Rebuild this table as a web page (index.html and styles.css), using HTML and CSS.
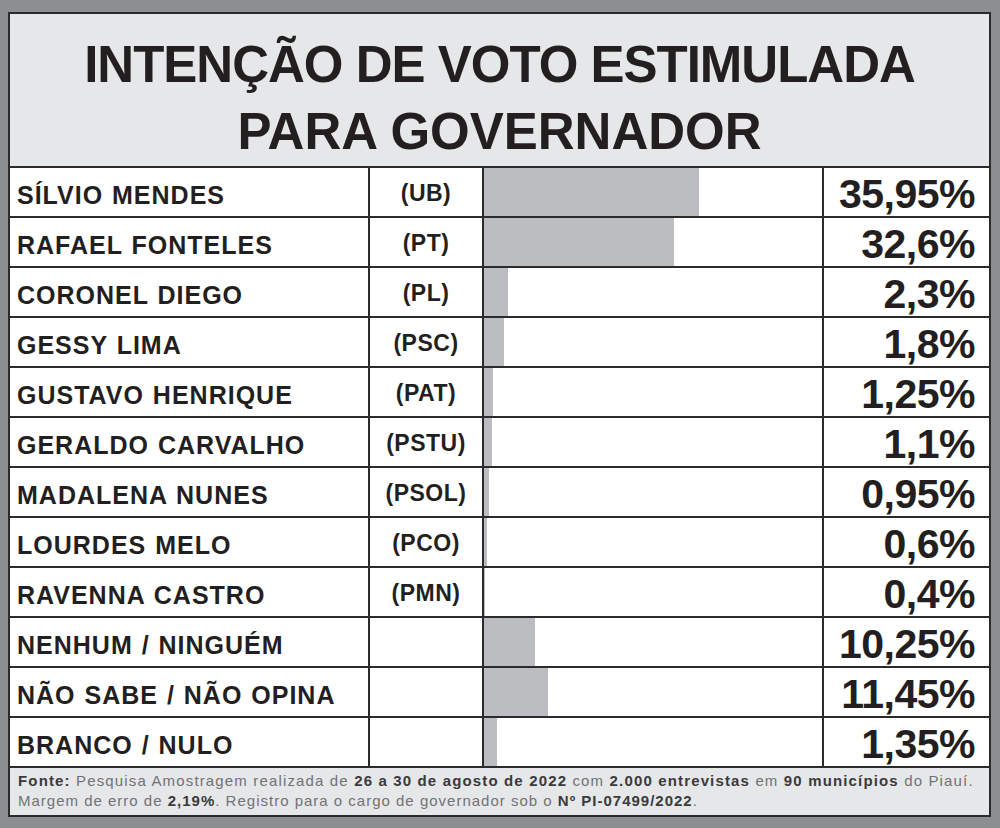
FILE: index.html
```html
<!DOCTYPE html>
<html lang="pt-BR">
<head>
<meta charset="utf-8">
<title>Intenção de voto estimulada para governador</title>
<link rel="stylesheet" href="styles.css">
</head>
<body>
<div class="panel">
  <div class="title">
    <div class="title-line">INTENÇÃO DE VOTO ESTIMULADA</div>
    <div class="title-line second">PARA GOVERNADOR</div>
  </div>
  <div class="grid">
    <div class="cell name">SÍLVIO MENDES</div><div class="cell party">(UB)</div><div class="cell bar"><span class="fill" style="width:215px"></span></div><div class="cell pct">35,95%</div>
    <div class="cell name">RAFAEL FONTELES</div><div class="cell party">(PT)</div><div class="cell bar"><span class="fill" style="width:190px"></span></div><div class="cell pct">32,6%</div>
    <div class="cell name">CORONEL DIEGO</div><div class="cell party">(PL)</div><div class="cell bar"><span class="fill" style="width:24px"></span></div><div class="cell pct">2,3%</div>
    <div class="cell name">GESSY LIMA</div><div class="cell party">(PSC)</div><div class="cell bar"><span class="fill" style="width:20px"></span></div><div class="cell pct">1,8%</div>
    <div class="cell name">GUSTAVO HENRIQUE</div><div class="cell party">(PAT)</div><div class="cell bar"><span class="fill" style="width:9px"></span></div><div class="cell pct">1,25%</div>
    <div class="cell name">GERALDO CARVALHO</div><div class="cell party">(PSTU)</div><div class="cell bar"><span class="fill" style="width:8px"></span></div><div class="cell pct">1,1%</div>
    <div class="cell name">MADALENA NUNES</div><div class="cell party">(PSOL)</div><div class="cell bar"><span class="fill" style="width:5px"></span></div><div class="cell pct">0,95%</div>
    <div class="cell name">LOURDES MELO</div><div class="cell party">(PCO)</div><div class="cell bar"><span class="fill" style="width:3px"></span></div><div class="cell pct">0,6%</div>
    <div class="cell name">RAVENNA CASTRO</div><div class="cell party">(PMN)</div><div class="cell bar"><span class="fill" style="width:1px"></span></div><div class="cell pct">0,4%</div>
    <div class="cell name">NENHUM / NINGUÉM</div><div class="cell party"></div><div class="cell bar"><span class="fill" style="width:51px"></span></div><div class="cell pct">10,25%</div>
    <div class="cell name">NÃO SABE / NÃO OPINA</div><div class="cell party"></div><div class="cell bar"><span class="fill" style="width:64px"></span></div><div class="cell pct">11,45%</div>
    <div class="cell name">BRANCO / NULO</div><div class="cell party"></div><div class="cell bar"><span class="fill" style="width:13px"></span></div><div class="cell pct">1,35%</div>
  </div>
  <div class="footer">
    <div class="foot-line"><b>Fonte:</b> Pesquisa Amostragem realizada de <b>26 a 30 de agosto de 2022</b> com <b>2.000 entrevistas</b> em <b>90 municípios</b> do Piauí.</div>
    <div class="foot-line tight">Margem de erro de <b>2,19%</b>. Registro para o cargo de governador sob o <b>Nº PI-07499/2022</b>.</div>
  </div>
</div>
</body>
</html>
```

FILE: styles.css
```css
html, body {
  margin: 0;
  padding: 0;
}
body {
  background: #8d8e92;
  width: 1000px;
  height: 828px;
  overflow: hidden;
  font-family: "Liberation Sans", Arial, sans-serif;
  color: #231f20;
}
.panel {
  margin: 12px 0 0 8px;
  width: 979px;
  border: 2px solid #2b2b2b;
  background: #e6e7e9;
}
.title {
  height: 152px;
  box-sizing: border-box;
  padding-top: 17px;
  text-align: center;
  font-weight: bold;
  font-size: 51px;
  letter-spacing: -1px;
  line-height: 67px;
}
.title-line.second {
  letter-spacing: 0px;
}
.grid {
  display: grid;
  grid-template-columns: 358px 112px 338px 165px;
  grid-auto-rows: 48px;
  gap: 2px;
  background: #2b2b2b;
  border-top: 2px solid #2b2b2b;
  border-bottom: 2px solid #2b2b2b;
}
.cell {
  background: #ffffff;
  display: flex;
  align-items: center;
  font-weight: bold;
  overflow: hidden;
}
.name {
  padding: 6px 0 0 7px;
  font-size: 25px;
  letter-spacing: 1px;
  word-spacing: 1px;
  white-space: nowrap;
}
.party {
  justify-content: center;
  padding-top: 3px;
  font-size: 23px;
  letter-spacing: 0.5px;
}
.bar {
  align-items: stretch;
}
.fill {
  display: block;
  background: #bcbdc0;
}
.pct {
  justify-content: flex-end;
  padding: 4px 14px 0 0;
  font-size: 41px;
  letter-spacing: -0.5px;
}
.footer {
  height: 47px;
  box-sizing: border-box;
  padding: 3px 0 0 8px;
  color: #717276;
  font-size: 15px;
  line-height: 20px;
  letter-spacing: 1.15px;
  white-space: nowrap;
}
.footer b {
  color: #3a3a3c;
}
.foot-line.tight {
  letter-spacing: 1px;
  word-spacing: 0;
}
```
